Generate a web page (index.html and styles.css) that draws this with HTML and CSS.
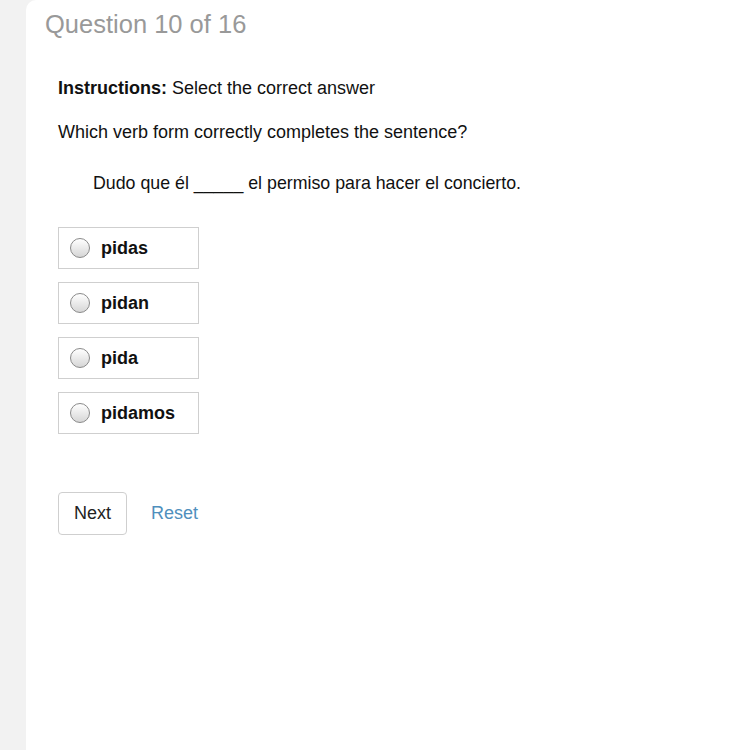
FILE: index.html
```html
<!DOCTYPE html>
<html>
<head>
<meta charset="utf-8">
<link rel="stylesheet" href="styles.css">
</head>
<body>
<div class="card">
  <h1 class="title">Question 10 of 16</h1>
  <div class="content">
    <p class="instructions"><b>Instructions:</b> Select the correct answer</p>
    <p class="question">Which verb form correctly completes the sentence?</p>
    <p class="sentence">Dudo que él _____ el permiso para hacer el concierto.</p>
    <div class="options">
      <label class="option"><span class="radio"></span><span class="label">pidas</span></label>
      <label class="option"><span class="radio"></span><span class="label">pidan</span></label>
      <label class="option"><span class="radio"></span><span class="label">pida</span></label>
      <label class="option"><span class="radio"></span><span class="label">pidamos</span></label>
    </div>
    <div class="actions">
      <button class="next">Next</button>
      <a class="reset">Reset</a>
    </div>
  </div>
</div>
</body>
</html>
```
FILE: styles.css
```css
html, body {
  margin: 0;
  padding: 0;
  height: 100%;
}
body {
  background: #f2f2f2;
  font-family: "Liberation Sans", Arial, sans-serif;
  color: #111;
  padding-left: 26px;
  box-sizing: border-box;
}
.card {
  background: #fff;
  min-height: 750px;
  border-top-left-radius: 10px;
  padding: 10px 0 0 19px;
  box-sizing: border-box;
}
.title {
  margin: 0;
  font-weight: normal;
  font-size: 25.5px;
  line-height: 28px;
  color: #999;
}
.content {
  padding-left: 13px;
}
.instructions {
  margin: 40px 0 0;
  font-size: 18px;
  line-height: 20px;
}
.instructions b {
  font-weight: bold;
}
.question {
  margin: 24px 0 0;
  font-size: 18px;
  line-height: 20px;
}
.sentence {
  margin: 31px 0 0;
  padding-left: 35px;
  font-size: 17.8px;
  line-height: 20px;
}
.options {
  margin-top: 34px;
  display: flex;
  flex-direction: column;
  gap: 13px;
}
.option {
  width: 141px;
  height: 42px;
  box-sizing: border-box;
  border: 1px solid #cfcfcf;
  display: flex;
  align-items: center;
  padding-left: 11px;
  gap: 11px;
}
.radio {
  width: 20px;
  height: 20px;
  box-sizing: border-box;
  border-radius: 50%;
  border: 1px solid #8a8a8a;
  background: linear-gradient(#ffffff, #d6d6d6);
  flex: none;
}
.label {
  font-weight: bold;
  font-size: 18px;
  color: #111;
}
.actions {
  margin-top: 58px;
  display: flex;
  align-items: center;
  gap: 24px;
}
.next {
  width: 69px;
  height: 43px;
  background: #fff;
  border: 1px solid #cfcfcf;
  border-radius: 4px;
  font-family: "Liberation Sans", Arial, sans-serif;
  font-size: 18px;
  color: #222;
  padding: 0;
}
.reset {
  font-size: 18px;
  color: #4f8fbd;
}
```
